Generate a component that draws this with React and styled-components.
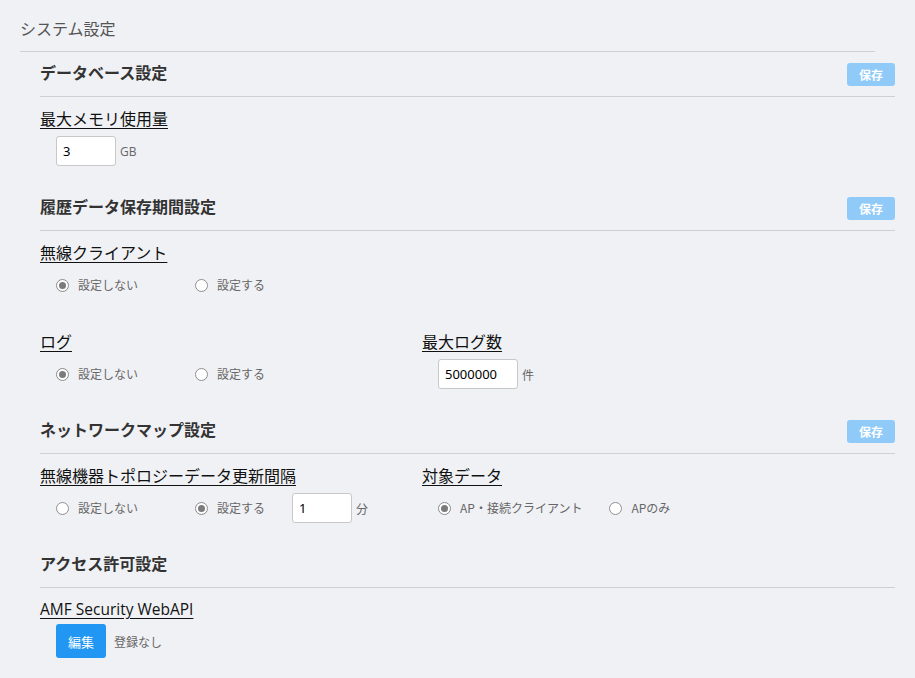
import React from "react";
import styled, { createGlobalStyle } from "styled-components";

const GlobalStyle = createGlobalStyle`
  html, body { margin: 0; padding: 0; background: #f0f1f5; }
  body { font-family: "Noto Sans CJK JP", "Noto Sans", sans-serif; color: #333; }
  * { box-sizing: border-box; }
`;

const Page = styled.div`
  padding: 0 20px 20px 20px;
  width: 915px;
`;

const Title = styled.h1`
  margin: 0;
  width: 855px;
  padding: 16px 0 11px 0;
  line-height: 24px;
  font-size: 16px;
  font-weight: 400;
  color: #555;
  border-bottom: 1px solid #cfd0d4;
`;

const Section = styled.section`
  margin-left: 20px;
  width: 855px;
  padding-bottom: 20px;
`;

const SectionHead = styled.div`
  display: flex;
  align-items: center;
  justify-content: space-between;
  height: 45px;
  border-bottom: 1px solid #cfd0d4;
`;

const SectionTitle = styled.h2`
  margin: 0;
  font-size: 16px;
  font-weight: 700;
  line-height: 22px;
  color: #333;
  position: relative;
  top: -2px;
`;

const SaveButton = styled.button`
  width: 48px;
  height: 23px;
  border: none;
  border-radius: 3px;
  background: #90caf9;
  color: #fff;
  font-family: inherit;
  font-size: 12px;
  font-weight: 700;
  padding: 0;
  line-height: 23px;
`;

const Columns = styled.div`
  display: grid;
  grid-template-columns: 382px 1fr;
  margin-top: ${(p) => p.$mt || 0}px;
`;

const Field = styled.div`
  margin-top: ${(p) => p.$mt ?? 10}px;
`;

const Label = styled.div`
  display: block;
  width: fit-content;
  font-size: ${(p) => (p.$latin ? 15.5 : 16)}px;
  line-height: 22px;
  height: 22px;
  color: #111;
  text-decoration: underline;
  text-underline-offset: 3px;
  font-family: ${(p) => (p.$latin ? `"Open Sans", "Noto Sans CJK JP", sans-serif` : "inherit")};
`;

const Row = styled.div`
  display: flex;
  align-items: center;
  height: ${(p) => p.$h || 30}px;
  margin-top: ${(p) => p.$mt ?? 7}px;
  padding-left: 16px;
`;

const Option = styled.label`
  display: inline-flex;
  align-items: center;
  min-width: ${(p) => p.$minWidth || 0}px;
  margin-right: 27px;
  font-size: 12px;
  color: #666;
  line-height: 18px;
`;

const RadioCircle = styled.span`
  width: 13px;
  height: 13px;
  border-radius: 50%;
  border: 1px solid ${(p) => (p.$checked ? "#8a8a8a" : "#8f8f8f")};
  background: #fff;
  margin-right: 9px;
  display: inline-flex;
  align-items: center;
  justify-content: center;
  flex: none;
  &::after {
    content: "";
    width: 7px;
    height: 7px;
    border-radius: 50%;
    background: ${(p) => (p.$checked ? "#7b7b7b" : "transparent")};
  }
`;

const TextInput = styled.input`
  width: ${(p) => p.$w || 60}px;
  height: 30px;
  border: 1px solid #c8c8c8;
  border-radius: 3px;
  background: #fff;
  padding: 0 6px;
  font-family: "Noto Sans", sans-serif;
  font-size: 13px;
  color: #000;
  outline: none;
`;

const Unit = styled.span`
  margin-left: 4px;
  font-size: 12px;
  color: #666;
  font-family: ${(p) => (p.$latin ? `"Open Sans", sans-serif` : "inherit")};
`;

const EditButton = styled.button`
  width: 50px;
  height: 34px;
  border: none;
  border-radius: 3px;
  background: #2196f3;
  color: #fff;
  font-family: inherit;
  font-size: 13px;
  padding: 0;
  margin-right: 8px;
`;

const Note = styled.span`
  font-size: 12px;
  color: #666;
`;

function Radio({ checked, children, minWidth }) {
  return (
    <Option $minWidth={minWidth}>
      <RadioCircle $checked={checked} />
      {children}
    </Option>
  );
}

export default function App() {
  return (
    <>
      <GlobalStyle />
      <Page>
        <Title>システム設定</Title>

        <Section>
          <SectionHead>
            <SectionTitle>データベース設定</SectionTitle>
            <SaveButton>保存</SaveButton>
          </SectionHead>
          <Field>
            <Label>最大メモリ使用量</Label>
            <Row>
              <TextInput defaultValue="3" $w={60} />
              <Unit $latin>GB</Unit>
            </Row>
          </Field>
        </Section>

        <Section>
          <SectionHead>
            <SectionTitle>履歴データ保存期間設定</SectionTitle>
            <SaveButton>保存</SaveButton>
          </SectionHead>
          <Field>
            <Label>無線クライアント</Label>
            <Row>
              <Radio checked minWidth={112}>設定しない</Radio>
              <Radio>設定する</Radio>
            </Row>
          </Field>
          <Columns $mt={30}>
            <div>
              <Label>ログ</Label>
              <Row>
                <Radio checked minWidth={112}>設定しない</Radio>
                <Radio>設定する</Radio>
              </Row>
            </div>
            <div>
              <Label>最大ログ数</Label>
              <Row>
                <TextInput defaultValue="5000000" $w={80} />
                <Unit>件</Unit>
              </Row>
            </div>
          </Columns>
        </Section>

        <Section>
          <SectionHead>
            <SectionTitle>ネットワークマップ設定</SectionTitle>
            <SaveButton>保存</SaveButton>
          </SectionHead>
          <Columns $mt={10}>
            <div>
              <Label>無線機器トポロジーデータ更新間隔</Label>
              <Row>
                <Radio minWidth={112}>設定しない</Radio>
                <Radio checked>設定する</Radio>
                <TextInput defaultValue="1" $w={60} />
                <Unit>分</Unit>
              </Row>
            </div>
            <div>
              <Label>対象データ</Label>
              <Row>
                <Radio checked>AP・接続クライアント</Radio>
                <Radio>APのみ</Radio>
              </Row>
            </div>
          </Columns>
        </Section>

        <Section>
          <SectionHead>
            <SectionTitle>アクセス許可設定</SectionTitle>
          </SectionHead>
          <Field>
            <Label $latin>AMF Security WebAPI</Label>
            <Row $h={34} $mt={4}>
              <EditButton>編集</EditButton>
              <Note>登録なし</Note>
            </Row>
          </Field>
        </Section>
      </Page>
    </>
  );
}
